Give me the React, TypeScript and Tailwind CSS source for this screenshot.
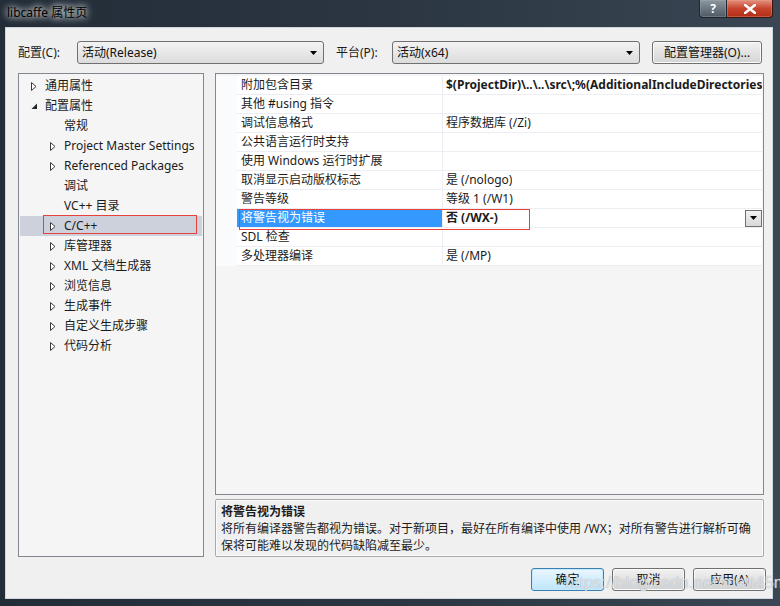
import React from "react";

const FONT = "font-['Noto_Sans','Noto_Sans_CJK_SC',sans-serif]";

type TreeItem = { label: string; level: 0 | 1; icon: "closed" | "open" | null; selected?: boolean };

const tree: TreeItem[] = [
  { label: "通用属性", level: 0, icon: "closed" },
  { label: "配置属性", level: 0, icon: "open" },
  { label: "常规", level: 1, icon: null },
  { label: "Project Master Settings", level: 1, icon: "closed" },
  { label: "Referenced Packages", level: 1, icon: "closed" },
  { label: "调试", level: 1, icon: null },
  { label: "VC++ 目录", level: 1, icon: null },
  { label: "C/C++", level: 1, icon: "closed", selected: true },
  { label: "库管理器", level: 1, icon: "closed" },
  { label: "XML 文档生成器", level: 1, icon: "closed" },
  { label: "浏览信息", level: 1, icon: "closed" },
  { label: "生成事件", level: 1, icon: "closed" },
  { label: "自定义生成步骤", level: 1, icon: "closed" },
  { label: "代码分析", level: 1, icon: "closed" },
];

type Row = { name: string; value: string; bold?: boolean; selected?: boolean };

const rows: Row[] = [
  { name: "附加包含目录", value: "$(ProjectDir)\\..\\..\\src\\;%(AdditionalIncludeDirectories)", bold: true },
  { name: "其他 #using 指令", value: "" },
  { name: "调试信息格式", value: "程序数据库 (/Zi)" },
  { name: "公共语言运行时支持", value: "" },
  { name: "使用 Windows 运行时扩展", value: "" },
  { name: "取消显示启动版权标志", value: "是 (/nologo)" },
  { name: "警告等级", value: "等级 1 (/W1)" },
  { name: "将警告视为错误", value: "否 (/WX-)", bold: true, selected: true },
  { name: "SDL 检查", value: "" },
  { name: "多处理器编译", value: "是 (/MP)" },
];

function DownArrow() {
  return (
    <svg width="7" height="4" viewBox="0 0 7 4">
      <path d="M0 0 H7 L3.5 4 Z" fill="#000" />
    </svg>
  );
}

function TreeIcon({ kind }: { kind: "closed" | "open" }) {
  if (kind === "open") {
    return (
      <svg width="7" height="7" viewBox="0 0 7 7">
        <path d="M6 0.5 V6 H0.5 Z" fill="#262626" />
      </svg>
    );
  }
  return (
    <svg width="6" height="9" viewBox="0 0 6 9">
      <path d="M0.5 0.5 L5 4.5 L0.5 8.5 Z" fill="#fff" stroke="#3c3c3c" strokeWidth="1" />
    </svg>
  );
}

function Combo({ text, w }: { text: string; w: string }) {
  return (
    <div
      className={`${w} h-[23px] flex items-center justify-between pl-[4px] pr-[6px] rounded-[3px] border border-[#707070] bg-gradient-to-b from-[#f3f3f3] to-[#dcdcdc] text-[12px] text-[#111]`}
    >
      <span>{text}</span>
      <DownArrow />
    </div>
  );
}

function Button({ text, w, def }: { text: string; w: string; def?: boolean }) {
  return (
    <div
      className={`${w} h-[23px] flex items-center justify-center rounded-[3px] border text-[12px] text-[#111] ${
        def
          ? "border-[#3c7fb1] bg-gradient-to-b from-[#eaf6fd] to-[#bee6fd] shadow-[inset_0_0_0_1px_#c6eafd]"
          : "border-[#707070] bg-gradient-to-b from-[#f2f2f2] to-[#d4d4d4] shadow-[inset_0_0_0_1px_#fbfbfb]"
      }`}
    >
      {text}
    </div>
  );
}

export default function App() {
  return (
    <div className={`${FONT} w-[780px] h-[606px] relative flex flex-col bg-gradient-to-r from-[#222d38] via-[#2b3642] to-[#3a4653] overflow-hidden`}>
      {/* Title bar */}
      <div className="h-[27px] flex items-start shrink-0">
        <div className="pl-[7px] h-[26px] flex items-center text-[12px] text-black [text-shadow:0_0_6px_#fff,0_0_10px_#fff]">
          libcaffe 属性页
        </div>
        <div className="ml-auto mr-[7px] flex">
          <div className="w-[28px] h-[18px] flex items-center justify-center rounded-bl-[4px] border border-t-0 border-[#1e252d] bg-gradient-to-b from-[#8d979f] to-[#4e5964] shadow-[inset_0_0_0_1px_#a9b2ba55] text-white font-bold text-[12px] leading-none">
            ?
          </div>
          <div className="w-[46px] h-[18px] flex items-center justify-center rounded-br-[4px] border border-t-0 border-l-0 border-[#3a1510] bg-gradient-to-b from-[#e3907e] via-[#c7432c] to-[#b12d15] shadow-[inset_0_0_0_1px_#f0a89855]">
            <svg width="12" height="10" viewBox="0 0 12 10">
              <path d="M1 1 L11 9 M11 1 L1 9" stroke="#fff" strokeWidth="2.6" strokeLinecap="square" />
            </svg>
          </div>
        </div>
      </div>

      {/* Client */}
      <div className="ml-[5px] w-[768px] h-[572px] border border-[#cfd6de] bg-[#f0f0f0] pl-[12px] pt-[13px] pr-[6px] flex flex-col text-[12px] text-[#1b1b1b]">
        {/* Top row */}
        <div className="h-[23px] flex items-center">
          <span className="w-[59px]">配置(C):</span>
          <Combo text="活动(Release)" w="w-[247px]" />
          <span className="ml-[12px] w-[56px]">平台(P):</span>
          <Combo text="活动(x64)" w="w-[248px]" />
          <div className="ml-[12px]">
            <Button text="配置管理器(O)..." w="w-[110px]" />
          </div>
        </div>

        {/* Main */}
        <div className="mt-[9px] h-[484px] flex">
          {/* Tree */}
          <div className="relative w-[186px] h-full border border-[#828790] bg-[#f5f5f5] pt-[2px]">
            {tree.map((t, i) => (
              <div
                key={i}
                className={`h-[20px] mx-[1px] flex items-center ${t.selected ? "bg-[#cdd1dc]" : ""} ${
                  t.level === 0 ? "pl-[10px]" : "pl-[29px]"
                }`}
              >
                <div className="w-[15px] flex items-center pl-[1px]">
                  {t.icon ? <TreeIcon kind={t.icon} /> : null}
                </div>
                <span className="leading-[20px] whitespace-nowrap">{t.label}</span>
              </div>
            ))}
            <div className="absolute left-[24px] top-[141px] w-[154px] h-[19px] border border-[#e8413c]" />
          </div>

          {/* Right column */}
          <div className="ml-[11px] w-[549px] flex flex-col">
            <div className="relative h-[422px] border border-[#828790] bg-[#f5f5f5] pt-[2px] overflow-hidden">
              {rows.map((r, i) => (
                <div key={i} className="h-[19px] flex">
                  <div className="w-[21px] bg-[#f9fbfd]" />
                  <div
                    className={`w-[206px] pl-[4px] flex items-center border-b border-r border-[#eceef3] whitespace-nowrap ${
                      r.selected ? "bg-[#3399ff] text-white border-b-[#eceef3]" : "bg-white"
                    }`}
                  >
                    {r.name}
                  </div>
                  <div
                    className={`w-[319px] pl-[3px] flex items-center justify-between border-b border-[#eceef3] bg-white whitespace-nowrap overflow-hidden ${
                      r.bold ? "font-bold" : ""
                    }`}
                  >
                    <span className="overflow-hidden">{r.value}</span>
                    {r.selected ? (
                      <div className="shrink-0 w-[17px] h-[17px] flex items-center justify-center border border-[#707070] bg-gradient-to-b from-[#f2f2f2] to-[#d8d8d8]">
                        <DownArrow />
                      </div>
                    ) : null}
                  </div>
                </div>
              ))}
              <div className="absolute left-[23px] top-[135px] w-[291px] h-[21px] border border-[#e8413c]" />
            </div>
            <div className="mt-[4px] h-[58px] border border-[#a9a9a9] rounded-[2px] shadow-[inset_0_0_0_1px_#fbfbfb] pl-[5px] pt-[3px] leading-[17px]">
              <div className="font-bold">将警告视为错误</div>
              <div className="whitespace-nowrap">将所有编译器警告都视为错误。对于新项目，最好在所有编译中使用 /WX；对所有警告进行解析可确</div>
              <div className="whitespace-nowrap">保将可能难以发现的代码缺陷减至最少。</div>
            </div>
          </div>
        </div>

        {/* Buttons */}
        <div className="mt-[11px] flex justify-end gap-[8px]">
          <Button text="确定" w="w-[73px]" def />
          <Button text="取消" w="w-[73px]" />
          <Button text="应用(A)" w="w-[73px]" />
        </div>
      </div>

      {/* Watermark */}
      <div className="absolute left-[565px] top-[570px] text-[17px] text-white/60 [text-shadow:0_0_1px_#9aa3ad] font-['Liberation_Sans',sans-serif] whitespace-nowrap">
        https://blog.csdn.net/matt45m
      </div>
    </div>
  );
}
